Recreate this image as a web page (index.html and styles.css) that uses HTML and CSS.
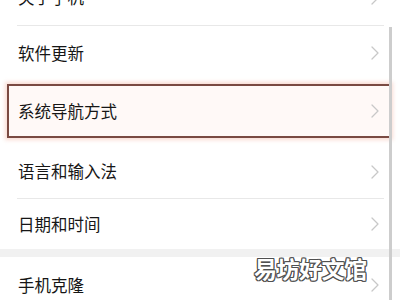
FILE: index.html
```html
<!DOCTYPE html>
<html lang="zh-CN">
<head>
<meta charset="utf-8">
<link rel="stylesheet" href="styles.css">
</head>
<body>
<div class="screen">
  <ul class="list">
    <li class="row r1"><span class="label">关于手机</span><svg class="chev" width="8" height="14" viewBox="0 0 8 14"><polyline points="1,1 7,7 1,13"/></svg></li>
    <li class="row r2 nob"><span class="label">软件更新</span><svg class="chev" width="8" height="14" viewBox="0 0 8 14"><polyline points="1,1 7,7 1,13"/></svg></li>
    <li class="row hl"><span class="label">系统导航方式</span><svg class="chev" width="8" height="14" viewBox="0 0 8 14"><polyline points="1,1 7,7 1,13"/></svg></li>
    <li class="row r4"><span class="label">语言和输入法</span><svg class="chev" width="8" height="14" viewBox="0 0 8 14"><polyline points="1,1 7,7 1,13"/></svg></li>
    <li class="row r5 nob"><span class="label">日期和时间</span><svg class="chev" width="8" height="14" viewBox="0 0 8 14"><polyline points="1,1 7,7 1,13"/></svg></li>
    <li class="gap"></li>
    <li class="row r6 nob"><span class="label">手机克隆</span><svg class="chev" width="8" height="14" viewBox="0 0 8 14"><polyline points="1,1 7,7 1,13"/></svg></li>
  </ul>
  <div class="scrollbar"></div>
  <div class="watermark">易坊好文馆</div>
</div>
</body>
</html>
```
FILE: styles.css
```css
* { box-sizing: border-box; }
html, body { margin: 0; padding: 0; background: #fff; }
body { font-family: "Noto Sans CJK SC", "Noto Sans", sans-serif; }
.screen {
  position: relative;
  width: 400px;
  height: 300px;
  overflow: hidden;
  background: #fff;
}
.list {
  list-style: none;
  margin: -30px 0 0 0;
  padding: 0;
}
.row {
  display: flex;
  align-items: center;
  justify-content: space-between;
  margin: 0 16px 0 17px;
  padding: 0 5px 0 1px;
  border-bottom: 1px solid #e8e8e8;
  font-size: 16.5px;
  color: #161616;
}
.row.nob { border-bottom: none; }
.label { line-height: 1; }
.chev polyline {
  fill: none;
  stroke: #c8c8c8;
  stroke-width: 1.3;
  stroke-linecap: round;
  stroke-linejoin: round;
}
.r1 { height: 56px; }
.r2 { height: 54px; }
.hl {
  height: 54px;
  margin: 4px 9px 7px 7px;
  padding: 0 10px 0 9px;
  border: 2px solid #7a4a42;
  background: #fff9f7;
  box-shadow: 0 0 4px 2px rgba(240, 165, 145, 0.4);
}
.r4 { height: 54px; }
.r5 { height: 50px; }
.gap {
  height: 8px;
  background: #f1f1f1;
}
.r6 { height: 56px; }
.scrollbar {
  position: absolute;
  left: 389px;
  top: 27px;
  bottom: 0;
  width: 3px;
  background: #cdcdcd;
}
.watermark {
  position: absolute;
  left: 254px;
  top: 257px;
  font-size: 23px;
  font-weight: 700;
  line-height: 1;
  color: #fff;
  letter-spacing: -0.5px;
  text-shadow:
    1px 0 0 #505050, -1px 0 0 #505050, 0 1px 0 #505050, 0 -1px 0 #505050,
    1px 1px 0 #505050, -1px -1px 0 #505050, 1px -1px 0 #505050, -1px 1px 0 #505050;
}
```
